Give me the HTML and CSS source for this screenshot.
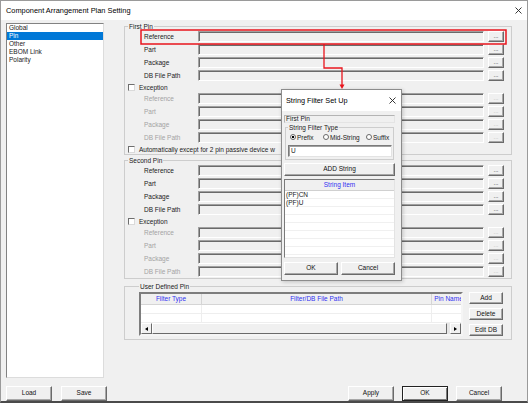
FILE: index.html
```html
<!DOCTYPE html>
<html lang="en">
<head>
    <meta charset="UTF-8">
    <title>Component Arrangement Plan Setting</title>
    <link rel="stylesheet" href="styles.css">
</head>
<body>
    <div class="window">
        <div class="titlebar">
            <span>Component Arrangement Plan Setting</span>
            <svg class="close" width="7" height="7" viewBox="0 0 7 7"><path d="M0.5 0.5L6.5 6.5M6.5 0.5L0.5 6.5" stroke="#222" stroke-width="0.9"/></svg>
        </div>

        <div class="main">
            <ul class="nav">
                <li>Global</li>
                <li class="selected">Pin</li>
                <li>Other</li>
                <li>EBOM Link</li>
                <li>Polarity</li>
            </ul>

            <div class="panel">
                <fieldset class="group">
                    <legend>First Pin</legend>
                    <div class="rows">
                        <div class="field-row"><label>Reference</label><span class="edit"></span><button class="btn more">...</button></div>
                        <div class="field-row"><label>Part</label><span class="edit"></span><button class="btn more">...</button></div>
                        <div class="field-row"><label>Package</label><span class="edit"></span><button class="btn more">...</button></div>
                        <div class="field-row"><label>DB File Path</label><span class="edit"></span><button class="btn more">...</button></div>
                        <div class="check-row"><span class="check"></span>Exception</div>
                        <div class="field-row disabled"><label>Reference</label><span class="edit"></span><button class="btn more">...</button></div>
                        <div class="field-row disabled"><label>Part</label><span class="edit"></span><button class="btn more">...</button></div>
                        <div class="field-row disabled"><label>Package</label><span class="edit"></span><button class="btn more">...</button></div>
                        <div class="field-row disabled"><label>DB File Path</label><span class="edit"></span><button class="btn more">...</button></div>
                        <div class="check-row"><span class="check"></span>Automatically except for 2 pin passive device w</div>
                    </div>
                </fieldset>

                <fieldset class="group">
                    <legend>Second Pin</legend>
                    <div class="rows">
                        <div class="field-row"><label>Reference</label><span class="edit"></span><button class="btn more">...</button></div>
                        <div class="field-row"><label>Part</label><span class="edit"></span><button class="btn more">...</button></div>
                        <div class="field-row"><label>Package</label><span class="edit"></span><button class="btn more">...</button></div>
                        <div class="field-row"><label>DB File Path</label><span class="edit"></span><button class="btn more">...</button></div>
                        <div class="check-row"><span class="check"></span>Exception</div>
                        <div class="field-row disabled"><label>Reference</label><span class="edit"></span><button class="btn more">...</button></div>
                        <div class="field-row disabled"><label>Part</label><span class="edit"></span><button class="btn more">...</button></div>
                        <div class="field-row disabled"><label>Package</label><span class="edit"></span><button class="btn more">...</button></div>
                        <div class="field-row disabled"><label>DB File Path</label><span class="edit"></span><button class="btn more">...</button></div>
                    </div>
                </fieldset>

                <fieldset class="group user">
                    <legend>User Defined Pin</legend>
                    <div class="user-body">
                        <div class="table">
                            <div class="thead">
                                <span>Filter Type</span><span>Filter/DB File Path</span><span>Pin Name</span>
                            </div>
                            <div class="tbody">
                                <div class="trow"><span></span><span></span><span></span></div>
                                <div class="trow"><span></span><span></span><span></span></div>
                            </div>
                            <div class="hscroll">
                                <span class="sb-btn"><i class="arrow left"></i></span>
                                <span class="sb-thumb"></span>
                                <span class="sb-track"></span>
                                <span class="sb-btn"><i class="arrow right"></i></span>
                            </div>
                        </div>
                        <div class="side-buttons">
                            <button class="btn">Add</button>
                            <button class="btn">Delete</button>
                            <button class="btn">Edit DB</button>
                        </div>
                    </div>
                </fieldset>
            </div>
        </div>

        <div class="footer">
            <div class="footer-left">
                <button class="btn">Load</button>
                <button class="btn">Save</button>
            </div>
            <div class="footer-right">
                <button class="btn">Apply</button>
                <button class="btn default">OK</button>
                <button class="btn">Cancel</button>
            </div>
        </div>

        <!-- popup opened from the Reference "..." button -->
        <div class="dialog">
            <div class="dialog-title">
                <span>String Filter Set Up</span>
                <svg width="7" height="7" viewBox="0 0 7 7"><path d="M0.5 0.5L6.5 6.5M6.5 0.5L0.5 6.5" stroke="#222" stroke-width="0.9"/></svg>
            </div>
            <div class="dialog-body">
                <div class="static">First Pin</div>
                <fieldset class="group filter-type">
                    <legend>String Filter Type</legend>
                    <div class="radios">
                        <span class="radio-item"><span class="radio on"></span>Prefix</span>
                        <span class="radio-item"><span class="radio"></span>Mid-String</span>
                        <span class="radio-item"><span class="radio"></span>Suffix</span>
                    </div>
                    <div class="input">U</div>
                </fieldset>
                <button class="btn wide">ADD String</button>
                <div class="string-list">
                    <div class="list-head">String Item</div>
                    <div class="list-row">(PF)CN</div>
                    <div class="list-row">(PF)U</div>
                    <div class="list-row"></div>
                    <div class="list-row"></div>
                    <div class="list-row"></div>
                    <div class="list-row"></div>
                    <div class="list-row"></div>
                    <div class="list-row"></div>
                </div>
                <div class="dialog-buttons">
                    <button class="btn">OK</button>
                    <button class="btn">Cancel</button>
                </div>
            </div>
        </div>

        <!-- red callout marking the Reference row -->
        <svg class="callout" width="528" height="403" viewBox="0 0 528 403">
            <rect x="141" y="30" width="365" height="14" fill="none" stroke="#e8141c" stroke-width="1.5"/>
            <path d="M324 44V68H342V85" fill="none" stroke="#e8141c" stroke-width="1.3"/>
            <polygon points="339.5,84.5 344.5,84.5 342,89" fill="#e8141c"/>
        </svg>
    </div>
</body>
</html>
```

FILE: styles.css
```css
* { box-sizing: border-box; }
body {
    margin: 0;
    background: #f0f0f0;
    font-family: "Liberation Sans", Arial, sans-serif;
    font-size: 6.5px;
    color: #1a1a1a;
}
.window {
    position: relative;
    width: 528px;
    height: 403px;
    border: 1px solid #9a9a9a;
    border-bottom: 2px solid #4a4a4a;
    background: #f0f0f0;
    display: flex;
    flex-direction: column;
}
.titlebar {
    height: 19px;
    background: #fff;
    display: flex;
    align-items: center;
    justify-content: space-between;
    padding: 0 5px;
    font-size: 7.4px;
    color: #000;
}

/* buttons */
.btn {
    font-family: inherit;
    font-size: 6.5px;
    color: #111;
    background: #f0f0f0;
    border: 1px solid;
    border-color: #fff #6a6a6a #6a6a6a #fff;
    box-shadow: inset -1px -1px 0 #a8a8a8;
    padding: 0;
    line-height: 1;
}
.btn.default {
    border-color: #222;
    box-shadow: inset 1px 1px 0 #fff, inset -1px -1px 0 #7a7a7a;
}

.main {
    display: flex;
    height: 358px;
    padding: 3px 0 0 5px;
}
.nav {
    width: 98px;
    height: 355px;
    margin: 0;
    padding: 0;
    list-style: none;
    background: #fff;
    border: 1px solid;
    border-color: #828282 #dcdcdc #dcdcdc #828282;
}
.nav li {
    height: 8px;
    line-height: 8px;
    padding-left: 2px;
}
.nav li.selected {
    background: #0078d7;
    color: #fff;
}
.panel {
    margin-left: 20px;
    width: 388px;
    display: flex;
    flex-direction: column;
}

/* group boxes */
.group {
    margin: 0;
    padding: 1px 7px 1px 3px;
    border: 1px solid #cdcdcd;
    min-width: 0;
}
.group + .group { margin-top: 2px; }
.group legend {
    padding: 0 1px;
    line-height: 7px;
    font-size: 6.5px;
}
.rows {
    display: flex;
    flex-direction: column;
    gap: 2px;
}
.field-row {
    display: grid;
    grid-template-columns: 50px 1fr 16px;
    column-gap: 4px;
    align-items: center;
    height: 11px;
    padding-left: 16px;
}
.edit {
    height: 11px;
    background: #f0f0f0;
    border: 1px solid;
    border-color: #a0a0a0 #fff #fff #a0a0a0;
    box-shadow: inset 1px 1px 0 #6a6a6a;
}
.more {
    height: 11px;
    font-size: 6px;
    line-height: 7px;
}
.disabled label { color: #a3a3a3; }
.disabled .more { color: #b5b5b5; }

.check-row {
    display: flex;
    align-items: center;
    gap: 4px;
    height: 8px;
    white-space: nowrap;
}
.check {
    flex: none;
    width: 7px;
    height: 7px;
    background: #fff;
    border: 1px solid;
    border-color: #6e6e6e #dadada #dadada #6e6e6e;
}

/* user defined pin */
.group.user {
    margin-top: 4px;
    padding: 2px 8px 3px 14px;
}
.user-body {
    display: flex;
    gap: 6px;
}
.table {
    width: 324px;
    height: 44px;
    border: 2px solid;
    border-color: #7d7d7d #f5f5f5 #f5f5f5 #7d7d7d;
    background: #fff;
    display: flex;
    flex-direction: column;
    overflow: hidden;
}
.thead, .trow {
    display: grid;
    grid-template-columns: 61px 230px 34px;
}
.thead {
    height: 11px;
    background: #f0f0f0;
    border-bottom: 1px solid #d5d5d5;
}
.thead span {
    color: #3030f0;
    text-align: center;
    line-height: 10px;
    white-space: nowrap;
    border-right: 1px solid #d5d5d5;
}
.tbody { flex: 1; }
.trow { height: 9px; border-bottom: 1px solid #eeeeee; }
.trow span { border-right: 1px solid #eeeeee; }
.hscroll {
    height: 11px;
    display: flex;
    background: #e6e6e6;
}
.sb-btn, .sb-thumb {
    background: #f0f0f0;
    border: 1px solid;
    border-color: #fff #6a6a6a #6a6a6a #fff;
}
.sb-btn {
    width: 11px;
    display: flex;
    align-items: center;
    justify-content: center;
}
.sb-thumb { width: 295px; }
.sb-track { flex: 1; }
.arrow {
    width: 0;
    height: 0;
    border-top: 2.5px solid transparent;
    border-bottom: 2.5px solid transparent;
}
.arrow.left { border-right: 3px solid #000; }
.arrow.right { border-left: 3px solid #000; }
.side-buttons {
    width: 34px;
    height: 44px;
    display: flex;
    flex-direction: column;
    justify-content: space-between;
}
.side-buttons .btn { height: 12px; }

/* bottom buttons */
.footer {
    display: flex;
    justify-content: space-between;
    padding: 8px 25px 0 5px;
}
.footer-left { display: flex; gap: 9px; }
.footer-right { display: flex; gap: 8px; }
.footer .btn { width: 46px; height: 15px; }

/* string filter popup */
.dialog {
    position: absolute;
    left: 280px;
    top: 88px;
    width: 121px;
    height: 192px;
    border: 1px solid #8c8c8c;
    background: #f0f0f0;
    box-shadow: 1px 1px 4px rgba(0,0,0,0.2);
}
.dialog-title {
    height: 21px;
    background: #fff;
    display: flex;
    align-items: center;
    justify-content: space-between;
    padding: 0 5px 0 4px;
    font-size: 7.3px;
    color: #000;
}
.dialog-body { padding: 4px 6px 0 2px; }
.static {
    height: 8px;
    line-height: 6px;
    padding-left: 1px;
    border: 1px solid;
    border-color: #b4b4b4 #e4e4e4 #e4e4e4 #b4b4b4;
}
.group.filter-type {
    margin: 1px 1px 0;
    padding: 2px 1px 2px 2px;
}
.radios {
    display: grid;
    grid-template-columns: 33px 43px auto;
    height: 8px;
    margin-left: 2px;
    align-items: center;
}
.radio-item {
    display: flex;
    align-items: center;
    gap: 1px;
    white-space: nowrap;
}
.radio {
    width: 6px;
    height: 6px;
    border-radius: 50%;
    background: #fff;
    border: 1px solid #6a6a6a;
}
.radio.on { background: radial-gradient(circle, #000 1.1px, #fff 1.6px); }
.input {
    margin-top: 4px;
    height: 12px;
    line-height: 10px;
    padding-left: 2px;
    background: #fff;
    border: 1px solid;
    border-color: #7a7a7a #e3e3e3 #e3e3e3 #7a7a7a;
    box-shadow: inset 1px 1px 0 #a0a0a0;
}
.wide {
    width: 100%;
    height: 13px;
    margin-top: 3px;
}
.string-list {
    margin-top: 3px;
    height: 79px;
    background: #fff;
    border: 1px solid;
    border-color: #7a7a7a #e3e3e3 #e3e3e3 #7a7a7a;
    overflow: hidden;
}
.list-head {
    height: 11px;
    line-height: 10px;
    text-align: center;
    color: #3030f0;
    background: #f0f0f0;
    border-bottom: 1px solid #d0d0d0;
}
.list-row {
    height: 8px;
    line-height: 7px;
    padding-left: 1px;
    border-bottom: 1px solid #f0f0f0;
}
.dialog-buttons {
    display: grid;
    grid-template-columns: 1fr 1fr;
    gap: 3px;
    margin-top: 4px;
}
.dialog-buttons .btn { height: 13px; }

.callout {
    position: absolute;
    left: -1px;
    top: -1px;
    pointer-events: none;
}
```
